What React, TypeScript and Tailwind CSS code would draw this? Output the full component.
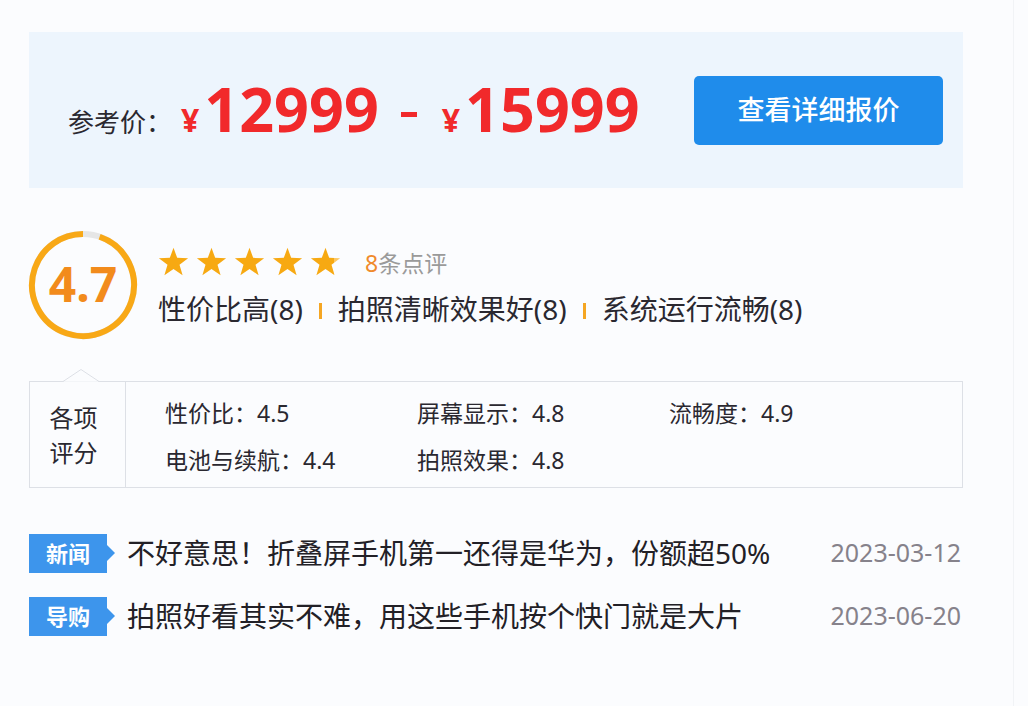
import React from "react";

const Star = ({ partial }: { partial?: boolean }) => (
  <svg width="31" height="30" viewBox="0 0 24 23">
    {partial && (
      <defs>
        <linearGradient id="pg" x1="0" x2="1" y1="0" y2="0">
          <stop offset="78%" stopColor="#f7a912" />
          <stop offset="78%" stopColor="#fbc763" />
        </linearGradient>
      </defs>
    )}
    <path
      d="M12 0.5l2.85 7.8 8.45.25-6.65 5.1 2.4 8.05L12 16.9l-7.05 4.8 2.4-8.05L0.7 8.55l8.45-.25z"
      fill={partial ? "url(#pg)" : "#f7a912"}
    />
  </svg>
);

const Tag = ({ label }: { label: string }) => (
  <div className="flex items-center shrink-0">
    <div className="w-[78px] h-[39px] bg-[#3d95ec] text-white text-[22px] font-bold flex items-center justify-center leading-none">
      {label}
    </div>
    <svg width="8" height="16" viewBox="0 0 8 16" className="block">
      <path d="M0 0 L8 8 L0 16 Z" fill="#3d95ec" />
    </svg>
  </div>
);

export default function App() {
  const font = "font-['Noto_Sans','Noto_Sans_CJK_SC',sans-serif]";
  return (
    <div className={`w-[1028px] h-[706px] bg-[#fbfcfe] ${font} text-[#2a2830] overflow-hidden`}>
      <div className="w-[1014px] h-[706px] border-r border-[#f1f3f6] pt-[32px] pl-[29px]">
        <div className="w-[934px]">
          {/* Price box */}
          <div className="h-[156px] bg-[#edf5fd] flex items-center justify-between pl-[39px] pr-[20px]">
            <div className="flex items-baseline pt-[2px]">
              <span className="text-[26px] text-[#2a2830]">参考价：</span>
              <span className="text-[32px] font-bold text-[#f1292b] ml-[9px]">¥</span>
              <span className="text-[61px] font-bold text-[#f1292b] ml-[5px] leading-none">12999</span>
              <span className="inline-block self-center w-[16px] h-[5px] bg-[#f1292b] ml-[22px] mt-[6px]" />
              <span className="text-[32px] font-bold text-[#f1292b] ml-[25px]">¥</span>
              <span className="text-[61px] font-bold text-[#f1292b] ml-[5px] leading-none">15999</span>
            </div>
            <div className="w-[249px] h-[69px] bg-[#1f8ceb] rounded-[5px] flex items-center justify-center text-white text-[27px] font-medium">
              查看详细报价
            </div>
          </div>

          {/* Rating */}
          <div className="flex mt-[42px] ml-[-1px]">
            <div className="relative w-[110px] h-[110px] shrink-0">
              <svg width="110" height="110" viewBox="0 0 110 110" className="absolute inset-0">
                <circle cx="55" cy="55" r="51" fill="none" stroke="#e6e6e6" strokeWidth="6" />
                <circle
                  cx="55"
                  cy="55"
                  r="51"
                  fill="none"
                  stroke="#f8a816"
                  strokeWidth="6"
                  strokeDasharray="303 320.4"
                  transform="rotate(-71 55 55)"
                />
              </svg>
              <div className="absolute inset-0 flex items-center justify-center text-[48px] font-bold text-[#f28b1c] leading-none pb-[2px]">
                4.7
              </div>
            </div>
            <div className="ml-[20px] pt-[16px]">
              <div className="flex items-center h-[31px]">
                <div className="flex gap-[7px]">
                  <Star />
                  <Star />
                  <Star />
                  <Star />
                  <Star partial />
                </div>
                <span className="ml-[24px] text-[23px] text-[#9a9a9a] mt-[4px]">
                  <span className="text-[#f08a2c]">8</span>条点评
                </span>
              </div>
              <div className="flex items-center mt-[14px] text-[28px] text-[#2a2830] leading-[36px]">
                <span>性价比高(8)</span>
                <span className="w-[3px] h-[16px] bg-[#f5a623] mx-[16px] mt-[3px]" />
                <span>拍照清晰效果好(8)</span>
                <span className="w-[3px] h-[16px] bg-[#f5a623] mx-[16px] mt-[3px]" />
                <span>系统运行流畅(8)</span>
              </div>
            </div>
          </div>

          {/* Scores box */}
          <div className="relative mt-[41px] h-[107px] border border-[#dde0e6] flex">
            <svg width="36" height="13" viewBox="0 0 36 13" className="absolute left-[33px] top-[-13px]">
              <path d="M0 12.5 L18 0.5 L36 12.5" fill="#fbfcfe" stroke="#dde0e6" strokeWidth="1" />
              <rect x="1" y="12.5" width="34" height="1" fill="#fbfcfe" />
            </svg>
            <div className="w-[96px] border-r border-[#dde0e6] flex flex-col items-center justify-center text-[24px] leading-[35px] text-[#2a2830] pr-[8px]">
              <span>各项</span>
              <span>评分</span>
            </div>
            <div className="pl-[39px] pt-[14px] grid grid-cols-[252px_252px_252px] gap-y-[12px] text-[23px] leading-[35px] text-[#2a2830] content-start">
              <span>性价比：4.5</span>
              <span>屏幕显示：4.8</span>
              <span>流畅度：4.9</span>
              <span>电池与续航：4.4</span>
              <span>拍照效果：4.8</span>
            </div>
          </div>

          {/* News */}
          <div className="mt-[44px] flex flex-col gap-[21px]">
            <div className="flex items-center">
              <Tag label="新闻" />
              <span className="ml-[12px] text-[28px] text-[#222026] flex-1">不好意思！折叠屏手机第一还得是华为，份额超50%</span>
              <span className="text-[25px] text-[#86828b] mr-[2px]">2023-03-12</span>
            </div>
            <div className="flex items-center">
              <Tag label="导购" />
              <span className="ml-[12px] text-[28px] text-[#222026] flex-1">拍照好看其实不难，用这些手机按个快门就是大片</span>
              <span className="text-[25px] text-[#86828b] mr-[2px]">2023-06-20</span>
            </div>
          </div>
        </div>
      </div>
    </div>
  );
}
